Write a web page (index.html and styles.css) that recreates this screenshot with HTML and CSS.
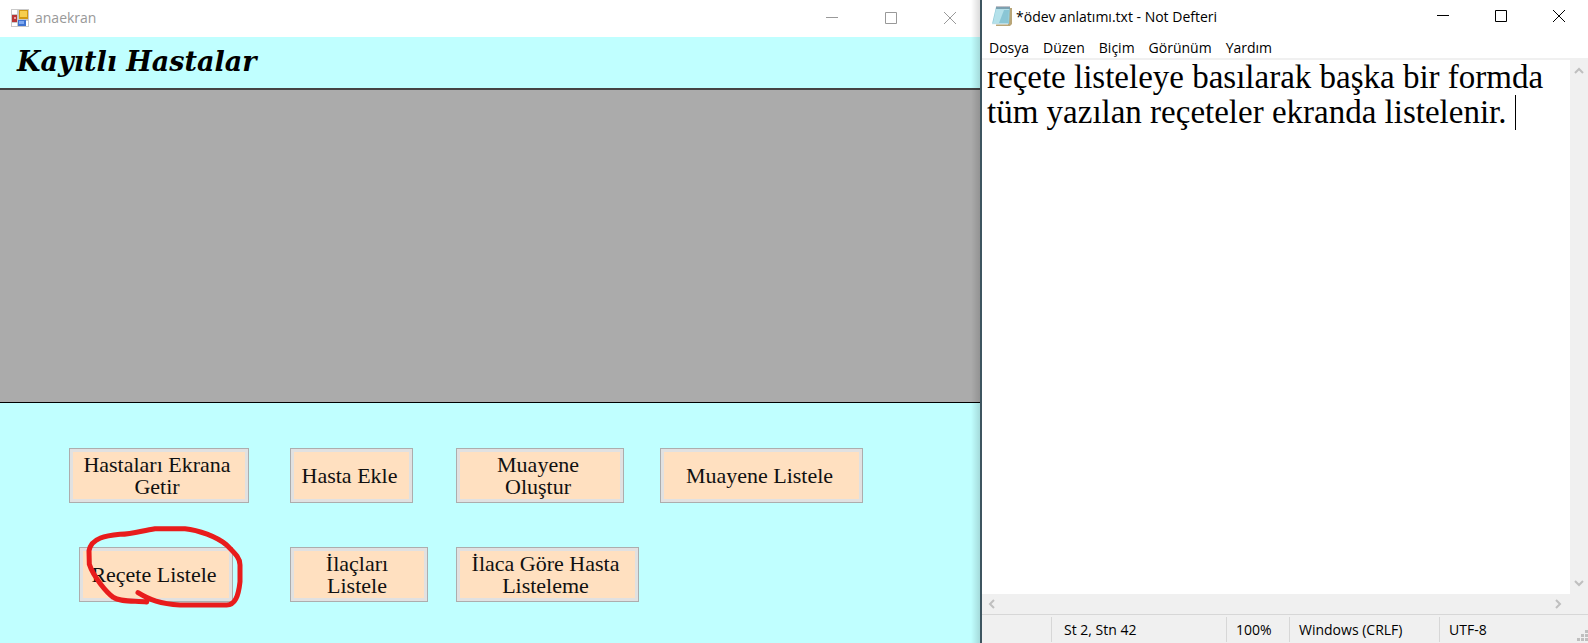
FILE: index.html
```html
<!DOCTYPE html>
<html lang="tr">
<head>
<meta charset="utf-8">
<title>anaekran</title>
<link rel="stylesheet" href="styles.css">
</head>
<body>
<div class="desktop">
  <section class="window form-window">
    <header class="titlebar inactive">
      <svg class="form-icon" viewBox="0 0 18 18" aria-hidden="true">
        <rect width="18" height="18" fill="#c9c9c9"/>
        <path d="M1 1h5v4H1zM1 14h5v3H1zM15 12h2v5h-2z" fill="#fff"/>
        <rect x="1" y="6" width="5" height="7" fill="#b93636"/>
        <rect x="3" y="8" width="2" height="2" fill="#e9a0a0"/>
        <rect x="8" y="1" width="9" height="9" fill="#d39a10"/>
        <rect x="9" y="2" width="7" height="6" fill="#f7cf4d"/>
        <rect x="7" y="11" width="8" height="6" fill="#3f73d0"/>
        <rect x="8" y="12" width="5" height="3" fill="#7fa9f0"/>
      </svg>
      <span class="title">anaekran</span>
      <div class="controls">
        <button type="button" aria-label="Simge durumuna küçült"><svg viewBox="0 0 12 12"><path d="M0 5.5h12"/></svg></button>
        <button type="button" aria-label="Ekranı kapla"><svg viewBox="0 0 12 12"><path d="M.5 .5h11v11H.5z"/></svg></button>
        <button type="button" aria-label="Kapat"><svg viewBox="0 0 12 12"><path d="M0 0l12 12M12 0L0 12"/></svg></button>
      </div>
    </header>
    <h1 class="heading">Kayıtlı Hastalar</h1>
    <div class="grid-view"></div>
    <div class="actions">
      <button type="button" class="action w180">Hastaları Ekrana Getir</button>
      <button type="button" class="action w123">Hasta Ekle</button>
      <button type="button" class="action w168">Muayene Oluştur</button>
      <button type="button" class="action w203">Muayene Listele</button>
      <div class="marked">
        <button type="button" class="action w154">Reçete Listele</button>
        <svg class="mark" viewBox="0 0 570 330" aria-hidden="true"><path d="M230 276C195 272 150 277 130 262C110 248 70 200 58 163L57 122C65 82 110 77 150 73C190 72 215 62 255 56L345 56C385 60 440 80 470 105C500 135 510 145 510 165L510 215C505 260 495 285 470 285L330 285C270 282 240 270 204 248"/></svg>
      </div>
      <button type="button" class="action w138">İlaçları Listele</button>
      <button type="button" class="action w183">İlaca Göre Hasta Listeleme</button>
    </div>
  </section>
  <section class="window notepad">
    <header class="titlebar">
      <svg class="note-icon" viewBox="0 0 20 20" aria-hidden="true">
        <path d="M5 2h15v16l-2 2H4z" fill="#b9a678"/>
        <path d="M4 1h14l-1 17H0z" fill="#8cc8d8"/>
        <path d="M4 3h13l-1 14H1z" fill="#b4e1ea"/>
        <path d="M12 4h5l-1 13H7z" fill="#8ac6d5"/>
        <path d="M5 0v3M7 0v3M9 0v3M11 0v3M13 0v3M15 0v3M17 0v3" stroke="#667" stroke-width=".8"/>
        <path d="M0 18h16" stroke="#e7f4f7"/>
      </svg>
      <span class="title">*ödev anlatımı.txt - Not Defteri</span>
      <div class="controls">
        <button type="button" aria-label="Simge durumuna küçült"><svg viewBox="0 0 12 12"><path d="M0 5.500h12"/></svg></button>
        <button type="button" aria-label="Ekranı kapla"><svg viewBox="0 0 12 12"><path d="M.5 .5h11v11H.5z"/></svg></button>
        <button type="button" aria-label="Kapat"><svg viewBox="0 0 12 12"><path d="M0 0l12 12M12 0L0 12"/></svg></button>
      </div>
    </header>
    <nav class="menu">
      <button type="button">Dosya</button>
      <button type="button">Düzen</button>
      <button type="button">Biçim</button>
      <button type="button">Görünüm</button>
      <button type="button">Yardım</button>
    </nav>
    <div class="editor">
      <div class="page">
        <textarea class="text" aria-label="Metin" spellcheck="false" wrap="off">reçete listeleye basılarak başka bir formda
tüm yazılan reçeteler ekranda listelenir.</textarea>
        <span class="caret"></span>
      </div>
      <div class="vscroll">
        <svg viewBox="0 0 10 8" aria-hidden="true"><path d="M1 6l4-4 4 4"/></svg>
        <svg viewBox="0 0 10 8" aria-hidden="true"><path d="M1 2l4 4 4-4"/></svg>
      </div>
    </div>
    <div class="hscroll">
      <svg viewBox="0 0 8 10" aria-hidden="true"><path d="M6 1L2 5l4 4"/></svg>
      <svg viewBox="0 0 8 10" aria-hidden="true"><path d="M2 1l4 4-4 4"/></svg>
    </div>
    <footer class="status">
      <span class="cell lead"></span>
      <span class="cell position">St 2, Stn 42</span>
      <span class="cell zoom">100%</span>
      <span class="cell ending">Windows (CRLF)</span>
      <span class="cell encoding">UTF-8</span>
      <svg class="grip" viewBox="0 0 11 11" aria-hidden="true"><path d="M8 0h3v3H8zM4 4h3v3H4zM8 4h3v3H8zM0 8h3v3H0zM4 8h3v3H4zM8 8h3v3H8z" fill="#bfbfbf"/></svg>
    </footer>
  </section>
</div>
</body>
</html>
```
FILE: styles.css
```css
* { box-sizing: border-box; }
body {
  margin: 0;
  font-family: "Open Sans", "Noto Sans", sans-serif;
  font-size: 14px;
  color: #000;
}
button { font: inherit; color: inherit; border: 0; background: none; padding: 0; }
.desktop { display: flex; min-height: 100vh; background: #3d5560; gap: 2px; }
.window { display: flex; flex-direction: column; min-width: 0; }
.form-window { flex: 980; background: #c0ffff; position: relative; }
.form-window::after {
  content: "";
  position: absolute;
  inset: 0 0 0 auto;
  width: 9px;
  background: linear-gradient(to right, transparent, rgba(0, 0, 0, .14));
  pointer-events: none;
}
.notepad { flex: 606; background: #fff; }

.titlebar { display: flex; align-items: center; height: 37px; background: #fff; padding: 0 1px 2px 11px; }
.notepad .titlebar { height: 34px; padding: 0 0 2px 10px; }
.inactive { color: #999; }
.form-icon { width: 18px; height: 18px; margin-right: 6px; }
.note-icon { width: 20px; height: 20px; margin-right: 4px; }
.title { flex: 1; }
.controls { display: flex; }
.controls button { width: 59px; height: 32px; display: grid; place-items: center; }
.notepad .controls button { width: 58px; }
.controls svg { width: 12px; height: 12px; fill: none; stroke: currentColor; overflow: visible; }

.heading {
  margin: 0;
  padding-left: 17px;
  height: 51px;
  font: italic bold 27px/50px "DejaVu Serif", serif;
}
.grid-view { height: 315px; background: #ababab; border-top: 2px solid #444; border-bottom: 1px solid #000; }
.actions {
  display: grid;
  grid-template-columns: 221px 166px 204px 203px;
  grid-auto-rows: 55px;
  row-gap: 44px;
  padding: 45px 0 41px 69px;
}
.action {
  height: 55px;
  padding: 0 10px 0 6px;
  background: #ffe0c0;
  border: 1px solid #adadad;
  box-shadow: inset 0 0 0 3px #e1e1e1;
  color: #111;
  font: 22px/22px "Liberation Serif", serif;
}
.w123 { width: 123px; }
.w138 { width: 138px; padding: 0 26px 0 22px; }
.w154 { width: 154px; }
.w168 { width: 168px; padding: 0 26px 0 22px; }
.w180 { width: 180px; }
.w183 { width: 183px; }
.w203 { width: 203px; }
.marked { position: relative; margin-left: 10px; }
.mark {
  position: absolute;
  left: -9px;
  top: -37px;
  width: 190px;
  height: 110px;
  fill: none;
  stroke: #e81c1c;
  stroke-width: 15;
  stroke-linecap: round;
  stroke-linejoin: round;
  pointer-events: none;
}

.menu { display: flex; gap: 14px; height: 26px; padding: 2px 0 0 7px; border-bottom: 2px solid #f0f0f0; }
.editor { flex: 1; display: flex; }
.page { flex: 1; position: relative; display: flex; min-width: 0; }
.text {
  flex: 1;
  min-width: 0;
  border: 0;
  padding: 0 0 0 5px;
  resize: none;
  outline: 0;
  overflow: hidden;
  background: #fff;
  color: #000;
  font: 33px/35px "Liberation Serif", serif;
}
.caret { position: absolute; left: 533px; top: 35px; width: 1px; height: 35px; background: #000; }
.vscroll {
  display: flex;
  flex-direction: column;
  justify-content: space-between;
  align-items: center;
  width: 18px;
  padding: 7px 0;
  background: #f0f0f0;
}
.vscroll svg { width: 10px; height: 8px; }
.hscroll {
  display: flex;
  justify-content: space-between;
  align-items: center;
  height: 20px;
  padding: 0 26px 0 6px;
  background: #f0f0f0;
}
.hscroll svg { width: 8px; height: 10px; }
.vscroll svg, .hscroll svg { fill: none; stroke: #bfbfbf; stroke-width: 2; }
.status {
  display: flex;
  position: relative;
  height: 29px;
  padding-top: 2px;
  border-top: 1px solid #d7d7d7;
  background: #f0f0f0;
}
.cell { border-right: 1px solid #d7d7d7; line-height: 26px; padding-left: 9px; margin-bottom: 1px; white-space: nowrap; }
.lead { width: 70px; }
.position { width: 175px; padding-left: 12px; }
.zoom { width: 63px; }
.ending { width: 150px; }
.encoding { flex: 1; border-right: 0; }
.grip { position: absolute; right: 0; bottom: 2px; width: 11px; height: 11px; }
```
